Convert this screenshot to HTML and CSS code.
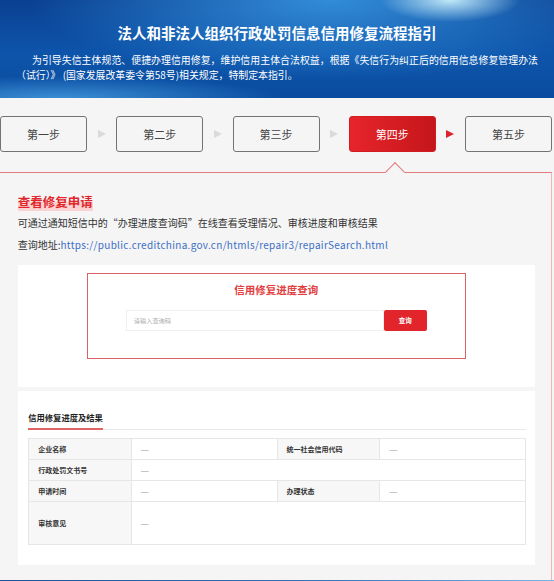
FILE: index.html
```html
<!DOCTYPE html>
<html lang="zh-CN">
<head>
  <meta charset="UTF-8">
  <meta name="viewport" content="width=device-width, initial-scale=1.0">
  <title>信用修复流程指引</title>
  <link rel="stylesheet" href="styles.css">
</head>
<body>
  <header class="banner">
    <h1 class="banner-title">法人和非法人组织行政处罚信息信用修复流程指引</h1>
    <p class="banner-intro">为引导失信主体规范、便捷办理信用修复，维护信用主体合法权益，根据《失信行为纠正后的信用信息修复管理办法（试行）》 (国家发展改革委令第58号)相关规定，特制定本指引。</p>
  </header>

  <div class="steps">
    <div class="step">第一步</div>
    <span class="step-arrow"></span>
    <div class="step">第二步</div>
    <span class="step-arrow"></span>
    <div class="step">第三步</div>
    <span class="step-arrow"></span>
    <div class="step step-active">第四步</div>
    <span class="step-arrow step-arrow-active"></span>
    <div class="step">第五步</div>
  </div>

  <section class="panel">
    <div class="panel-head"><span class="panel-title">查看修复申请</span></div>
    <p class="panel-text">可通过通知短信中的“办理进度查询码”在线查看受理情况、审核进度和审核结果</p>
    <p class="panel-text">查询地址:<a class="link" href="#">https://public.creditchina.gov.cn/htmls/repair3/repairSearch.html</a></p>

    <div class="card card-search">
      <div class="search-box">
        <h3 class="search-title">信用修复进度查询</h3>
        <form class="search-form">
          <input class="search-input" type="text" placeholder="请输入查询码">
          <button class="search-btn" type="button">查询</button>
        </form>
      </div>
    </div>

    <div class="card card-result">
      <div class="result-head"><span class="result-title">信用修复进度及结果</span></div>
      <table class="result-table">
        <tr>
          <td class="label">企业名称</td>
          <td class="value">—</td>
          <td class="label">统一社会信用代码</td>
          <td class="value">—</td>
        </tr>
        <tr>
          <td class="label">行政处罚文书号</td>
          <td class="value" colspan="3">—</td>
        </tr>
        <tr>
          <td class="label">申请时间</td>
          <td class="value">—</td>
          <td class="label">办理状态</td>
          <td class="value">—</td>
        </tr>
        <tr class="row-tall">
          <td class="label">审核意见</td>
          <td class="value" colspan="3">—</td>
        </tr>
      </table>
    </div>
  </section>

  <footer class="footer"></footer>
</body>
</html>
```

FILE: styles.css
```css
body {
  margin: 0;
  background-color: #f5f5f5;
  font-family: "Noto Sans CJK SC", "Noto Sans", sans-serif;
  color: #333;
}
.banner {
  height: 98px;
  box-sizing: border-box;
  padding: 22px 16px 0;
  color: #fff;
  background:
    radial-gradient(ellipse 70px 22px at 450px 0, rgba(210, 245, 255, 0.9), rgba(210, 245, 255, 0)),
    radial-gradient(ellipse 300px 80px at 330px 0, rgba(60, 160, 235, 0.8), rgba(60, 160, 235, 0)),
    radial-gradient(ellipse 220px 22px at 60px 98px, rgba(80, 170, 235, 0.7), rgba(80, 170, 235, 0)),
    linear-gradient(180deg, #0b4090 0%, #0d55ab 55%, #0a4c9f 100%);
}
.banner-title {
  margin: 0;
  font-size: 14.5px;
  line-height: 22px;
  font-weight: bold;
  text-align: center;
}
.banner-intro {
  margin: 9px 0 0;
  font-size: 9.9px;
  line-height: 15px;
  text-indent: 16px;
  text-align: justify;
}
.steps {
  display: flex;
  justify-content: space-between;
  align-items: center;
  width: 552px;
  margin-top: 18px;
}
.step {
  width: 87px;
  height: 36px;
  box-sizing: border-box;
  display: flex;
  justify-content: center;
  align-items: center;
  border: 1px solid #737373;
  border-radius: 3px;
  font-size: 11px;
  color: #444;
}
.step-active {
  border-color: #d21c22;
  background: linear-gradient(90deg, #e6252b, #c5161b);
  color: #fff;
}
.step-arrow {
  width: 0;
  height: 0;
  border-top: 4px solid transparent;
  border-bottom: 4px solid transparent;
  border-left: 8px solid #dadada;
}
.step-arrow-active {
  border-left-color: #da232a;
}
.panel {
  position: relative;
  width: 552px;
  box-sizing: border-box;
  margin-top: 20px;
  padding: 21px 16px 15px 17.7px;
  border-top: 1px solid #e27b7b;
  border-right: 1px solid #efb4b4;
}
.panel::before {
  content: "";
  position: absolute;
  top: -8px;
  left: 388px;
  width: 14px;
  height: 14px;
  box-sizing: border-box;
  border-top: 1px solid #e27b7b;
  border-left: 1px solid #e27b7b;
  background: #f5f5f5;
  transform: rotate(45deg);
}
.panel-head {
  height: 16px;
  font-size: 12.5px;
  line-height: 16px;
}
.panel-title {
  font-weight: bold;
  color: #e0262b;
  background: linear-gradient(transparent 55%, #fbd2d2 55%);
}
.panel-text {
  margin: 0;
  font-size: 10px;
  line-height: 22px;
  color: #333;
}
.panel-text:first-of-type {
  margin-top: 2px;
}
.link {
  letter-spacing: 0.3px;
  color: #3b6fc6;
  text-decoration: none;
}
.card {
  background: #fff;
}
.card-search {
  height: 122px;
  box-sizing: border-box;
  margin-top: 9px;
  padding-top: 8px;
}
.search-box {
  width: 379px;
  height: 86px;
  box-sizing: border-box;
  margin: 0 auto;
  padding-top: 7.5px;
  border: 1.5px solid #da6262;
  text-align: center;
}
.search-title {
  margin: 0;
  font-size: 10.5px;
  line-height: 16px;
  font-weight: bold;
  color: #e2403f;
}
.search-form {
  display: flex;
  justify-content: center;
  margin-top: 12px;
}
.search-input {
  width: 258px;
  height: 21px;
  box-sizing: border-box;
  padding: 0 7px;
  border: 1px solid #efefef;
  outline: none;
  font-family: inherit;
  font-size: 6.2px;
}
.search-input::placeholder {
  color: #aaa;
}
.search-btn {
  width: 43px;
  height: 21px;
  border: none;
  border-radius: 2px;
  background: #e1252a;
  color: #fff;
  font-family: inherit;
  font-size: 6.5px;
  font-weight: bold;
  cursor: pointer;
}
.card-result {
  margin-top: 4px;
  padding: 20px 9px 20px 10.5px;
}
.result-head {
  display: flex;
  border-bottom: 1px solid #e8e8e8;
}
.result-title {
  margin-bottom: -1px;
  padding-bottom: 5px;
  border-bottom: 2px solid #e06464;
  font-size: 8.3px;
  line-height: 12px;
  font-weight: bold;
  color: #222;
}
.result-table {
  width: 100%;
  margin-top: 8px;
  border-collapse: collapse;
  table-layout: fixed;
  font-size: 7px;
}
.result-table td {
  height: 20px;
  padding: 0 9px;
  border: 1px solid #e6e6e6;
}
.result-table .label {
  width: 20%;
  background: #f7f7f7;
  font-weight: bold;
  color: #333;
}
.result-table .value {
  width: 30%;
  font-family: "Liberation Sans", sans-serif;
  font-size: 8px;
  color: #999;
}
.result-table .row-tall td {
  height: 42px;
}
.footer {
  height: 10px;
  background: linear-gradient(90deg, #1f4f94, #3d74b6 60%, #7fb3e0);
}
```
